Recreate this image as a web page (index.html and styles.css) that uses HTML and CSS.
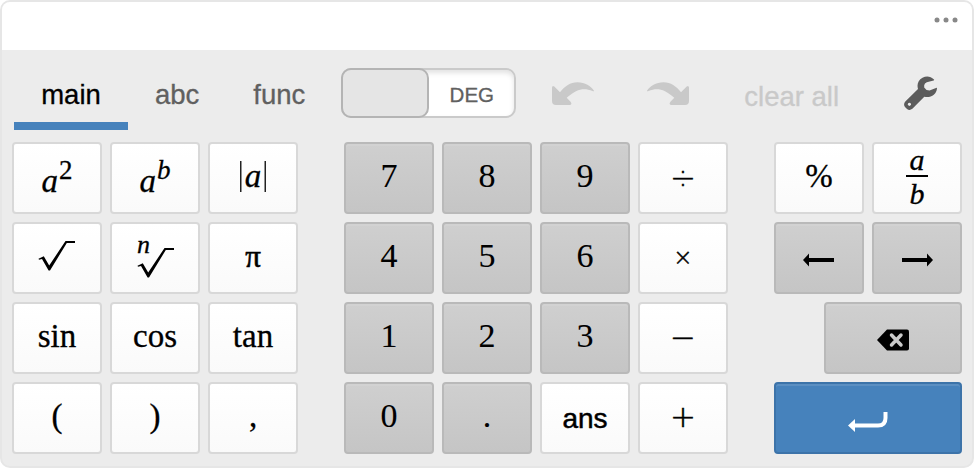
FILE: index.html
```html
<!DOCTYPE html>
<html lang="en">
<head>
<meta charset="utf-8">
<title>Calculator keypad</title>
<link rel="stylesheet" href="styles.css">
</head>
<body>
<div class="panel">
  <div class="answer">
    <svg class="dots" width="24" height="6" viewBox="0 0 24 6"><circle cx="3" cy="3" r="2.5"/><circle cx="12" cy="3" r="2.5"/><circle cx="21" cy="3" r="2.5"/></svg>
  </div>
  <div class="toolbar">
    <div class="tabs">
      <div class="tab active">main</div>
      <div class="tab">abc</div>
      <div class="tab">func</div>
    </div>
    <div class="toggle"><div class="knob"></div><div class="mode">DEG</div></div>
    <svg class="undo" width="42" height="24" viewBox="0 0 42 24"><path d="M0 5.500Q.3 3 2.300 4.500L8 10.300C13 4 18 .2 25.500 .2C33 .2 39 4 42 8.700Q42 9.700 40.500 9C32 5.500 25 6.500 14.700 15.800L18.800 20Q20.500 22.500 17.500 23H4Q0 23 0 19Z"/></svg>
    <svg class="redo" width="42" height="24" viewBox="0 0 42 24"><path transform="matrix(-1 0 0 1 42 0)" d="M0 5.500Q.3 3 2.300 4.500L8 10.300C13 4 18 .2 25.500 .2C33 .2 39 4 42 8.700Q42 9.700 40.500 9C32 5.500 25 6.500 14.700 15.800L18.800 20Q20.500 22.500 17.500 23H4Q0 23 0 19Z"/></svg>
    <div class="clear">clear all</div>
    <svg class="wrench" width="34" height="34" viewBox="0 0 34 34"><path fill-rule="evenodd" d="M30 3.500C26.500.2 22.500-.3 18.500 1.800C14 4.300 12.700 8.700 14 13L1.300 25.600Q-1 28.500 1 31L3 33Q5.700 35 8.400 32.800L20.300 20.700C26.500 22 32.500 19 33 12.200Q33 11.300 32 11.900L25.500 14.600Q21.500 14 20.200 11.400L20.200 9.300Q20.500 7.200 22.800 6.300L29.600 4.400Q30.500 4.200 30 3.500ZM5.400 26.700a1.600 1.600 0 1 0 .01 0Z"/></svg>
  </div>
  <div class="keypad">
    <div class="group letters">
      <div class="key"><span class="power"><i>a</i><span class="exp">2</span></span></div>
      <div class="key"><span class="power"><i>a</i><i class="exp">b</i></span></div>
      <div class="key"><span class="abs"><i>a</i></span></div>
      <div class="key"><svg class="sqrt" width="38" height="32" viewBox="0 0 38 32"><path class="radical" d="M.5 17.800L5.800 15.200L11.200 24.600L27.500 0H37V2H28.800L12 29.500H10.600L4 18L1 18.800Z"/></svg></div>
      <div class="key"><span class="root"><i>n</i><svg width="38" height="30" viewBox="0 0 38 30"><path class="radical" d="M.5 17.800L5.800 15.200L11.200 24.600L27.500 0H37V2H28.800L12 29.500H10.600L4 18L1 18.800Z"/></svg></span></div>
      <div class="key"><span class="pi">π</span></div>
      <div class="key">sin</div>
      <div class="key">cos</div>
      <div class="key">tan</div>
      <div class="key">(</div>
      <div class="key">)</div>
      <div class="key">,</div>
    </div>
    <div class="group digits">
      <div class="key dark">7</div><div class="key dark">8</div><div class="key dark">9</div><div class="key op">÷</div>
      <div class="key dark">4</div><div class="key dark">5</div><div class="key dark">6</div><div class="key op times">×</div>
      <div class="key dark">1</div><div class="key dark">2</div><div class="key dark">3</div><div class="key op">−</div>
      <div class="key dark">0</div><div class="key dark">.</div><div class="key ans">ans</div><div class="key op plus">+</div>
    </div>
    <div class="group actions">
      <div class="key">%</div>
      <div class="key"><span class="fraction"><i>a</i><i class="denominator">b</i></span></div>
      <div class="key dark icon"><svg width="32" height="14" viewBox="0 0 32 14"><path d="M0 7L6 .6V5H31V9H6V13.400Z"/></svg></div>
      <div class="key dark icon"><svg width="32" height="14" viewBox="0 0 32 14"><path d="M32 7L26 .6V5H1V9H26V13.400Z"/></svg></div>
      <div class="key dark icon backspace"><svg width="32" height="22" viewBox="0 0 32 22"><path d="M0 11L10 .5H30Q32 .5 32 2.500V19.500Q32 21.500 30 21.500H10Z"/><path class="cross" d="M14.500 6L24 16M24 6L14.500 16"/></svg></div>
      <div class="key enter icon"><svg width="40" height="20" viewBox="0 0 40 20"><path d="M0 13.500L7 7V20Z"/><path class="stem" d="M6 13.500H30Q37.500 13.500 37.500 6V0"/></svg></div>
    </div>
  </div>
</div>
</body>
</html>
```
FILE: styles.css
```css
* { box-sizing: border-box; }
body {
  margin: 0;
  background: #fff;
  font-family: "Liberation Sans", Arial, sans-serif;
}
svg { display: block; flex: none; }
.panel {
  width: 974px;
  height: 468px;
  border: 2px solid #e6e6e6;
  border-radius: 10px;
  background: #ececec;
  overflow: hidden;
}
.answer {
  height: 48px;
  padding: 15px 14px 0 0;
  background: #fff;
  display: flex;
  justify-content: flex-end;
}
.dots { fill: #888; }
.toolbar {
  height: 92px;
  padding-left: 12px;
  display: flex;
  align-items: flex-start;
  font-size: 27.5px;
  color: #606060;
  -webkit-text-stroke: 0.3px;
}
.tabs { display: flex; }
.tab {
  height: 80px;
  padding: 29px 27px 0;
  line-height: 32px;
  border-bottom: 8px solid transparent;
}
.tab.active { color: #000; border-color: #4682bc; padding: 29px 0 0; width: 114px; text-align: center; }
.toggle {
  width: 175px;
  height: 50px;
  margin: 18px 0 0 9px;
  border: 2px solid #cacaca;
  border-radius: 10px;
  background: #fff;
  box-shadow: inset 0 3px 5px #e2e2e2;
  display: flex;
}
.knob {
  width: 88px;
  height: 50px;
  margin: -2px 0 0 -2px;
  border: 2px solid #b4b4b4;
  border-radius: 10px;
  background: #e5e5e5;
}
.mode {
  flex: 1;
  font-size: 20.5px;
  line-height: 50px;
  text-align: center;
}
.undo, .redo { fill: #c9c9c9; margin-top: 32px; }
.undo { margin-left: 36px; }
.redo { margin-left: 53px; }
.clear {
  width: 98px;
  margin: 31px 0 0 55px;
  line-height: 32px;
  color: #c9c9c9;
  white-space: nowrap;
}
.wrench { margin: 26px 0 0 62px; fill: #5c5c5c; }
.keypad { display: flex; gap: 46px; padding-left: 10px; }
.group { display: grid; gap: 8px; grid-auto-rows: 72px; }
.letters { grid-template-columns: repeat(3, 90px); }
.digits { grid-template-columns: repeat(4, 90px); }
.actions { grid-template-columns: repeat(2, 90px); }
.key {
  display: flex;
  align-items: center;
  justify-content: center;
  padding-bottom: 4px;
  border: 2px solid #d8d8d8;
  border-radius: 4px;
  background: linear-gradient(#fff, #fafafa);
  font-family: "Liberation Serif", "Times New Roman", serif;
  font-size: 33px;
  line-height: 36px;
  color: #000;
  -webkit-text-stroke: 0.3px;
}
.key.dark {
  border-color: #b9b9b9;
  background: linear-gradient(#cfcfcf, #c5c5c5);
  box-shadow: inset 0 2px 0 #d2d2d2;
}
.digits .dark { font-size: 34px; -webkit-text-stroke: 0.1px; }
.key.op {
  font-family: "DejaVu Sans", sans-serif;
  font-weight: 200;
  font-size: 31px;
  padding: 0 0 2px;
  -webkit-text-stroke: 0.5px;
}
.key.times { font-size: 23px; padding-bottom: 2px; }
.key.plus { padding-bottom: 5px; }
.key.ans { font-family: "Liberation Sans", Arial, sans-serif; font-size: 28px; padding: 2px 0 0; -webkit-text-stroke: 0.5px; }
.key.icon { padding: 4px 0 0; }
.power { display: flex; padding-top: 10px; }
.exp { font-size: 27px; margin: -11px 0 0 1px; }
.abs {
  height: 31px;
  width: 26px;
  line-height: 30px;
  text-align: center;
  box-shadow: inset 1.5px 0 #222, inset -1.5px 0 #222;
}
.radical { fill: #000; }
.sqrt { margin-top: 2px; }
.root { display: flex; }
.root i { font-size: 26px; width: 15px; margin: -8px -15px 0 2px; }
.root svg { margin-top: 13px; }
.pi { font-size: 31px; padding-top: 2px; -webkit-text-stroke: 0.6px; }
.fraction {
  display: flex;
  flex-direction: column;
  align-items: center;
  width: 22px;
  font-size: 30px;
  line-height: 30px;
  padding-top: 2px;
}
.denominator { border-top: 2px solid #000; width: 22px; text-align: center; line-height: 33px; }
.backspace { width: 138px; }
.backspace, .enter { grid-column: 1 / 3; justify-self: end; }
.cross { fill: none; stroke: #cacaca; stroke-width: 3.5; stroke-linecap: round; }
.key.enter {
  width: 188px;
  border-color: #3c73a9;
  background: #4682bc;
  box-shadow: inset 0 2px 0 #5b8fc2;
  fill: #fff;
  padding-top: 7px;
}
.stem { fill: none; stroke: #fff; stroke-width: 4; }
```
